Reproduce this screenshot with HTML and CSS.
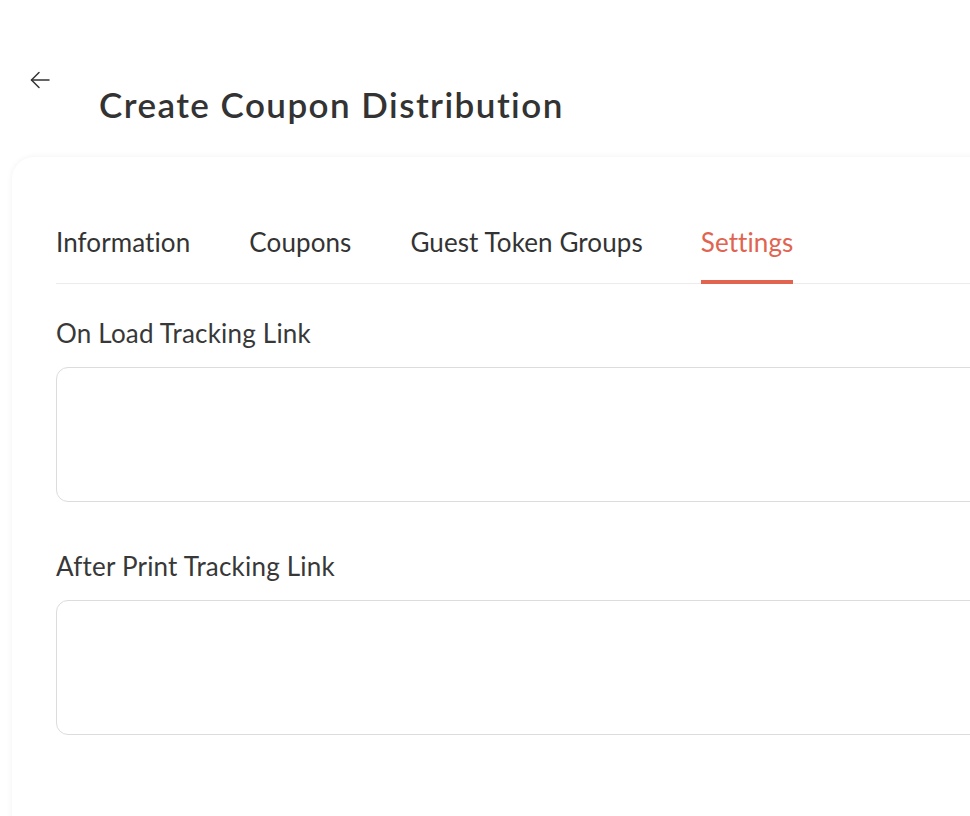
FILE: index.html
```html
<!DOCTYPE html>
<html lang="en">
<head>
<meta charset="utf-8">
<title>Create Coupon Distribution</title>
<link rel="stylesheet" href="styles.css">
</head>
<body>
<div class="page">
  <header class="page-header">
    <button class="back-btn" aria-label="Back">
      <svg width="24" height="24" viewBox="0 0 24 24" fill="none" stroke="#333" stroke-width="1.5" stroke-linecap="round" stroke-linejoin="round"><path d="M21 12H3.5"/><path d="M11 4.5L3.5 12l7.5 7.5"/></svg>
    </button>
    <h1 class="page-title">Create Coupon Distribution</h1>
  </header>
  <section class="card">
    <nav class="tabs">
      <a class="tab">Information</a>
      <a class="tab">Coupons</a>
      <a class="tab">Guest Token Groups</a>
      <a class="tab tab-active">Settings</a>
    </nav>
    <div class="field field-first">
      <label class="field-label">On Load Tracking Link</label>
      <textarea class="field-input"></textarea>
    </div>
    <div class="field">
      <label class="field-label">After Print Tracking Link</label>
      <textarea class="field-input"></textarea>
    </div>
  </section>
</div>
</body>
</html>
```
FILE: styles.css
```css
html, body {
  margin: 0;
  padding: 0;
  background: #fff;
  overflow: hidden;
}
body {
  font-family: "Lato", "Noto Sans", sans-serif;
  color: #333;
}
.page {
  width: 1040px;
}
.page-header {
  position: relative;
  height: 157px;
}
.back-btn {
  position: absolute;
  left: 28px;
  top: 68px;
  width: 24px;
  height: 24px;
  padding: 0;
  border: 0;
  background: none;
}
.page-title {
  margin: 0;
  padding: 84px 0 0 99px;
  font-size: 35px;
  line-height: 40px;
  font-weight: 600;
  letter-spacing: 1.45px;
  color: #333;
}
.card {
  margin-left: 12px;
  background: #fff;
  border-radius: 22px;
  box-shadow: 0 0 6px rgba(0,0,0,0.06);
  padding: 70px 0 80px 44px;
  min-height: 700px;
}
.tabs {
  display: flex;
  gap: 58px;
  border-bottom: 1px solid #ececec;
}
.tab {
  font-size: 26px;
  line-height: 30px;
  letter-spacing: 0.1px;
  padding-bottom: 23px;
  color: #333;
  border-bottom: 4px solid transparent;
  margin-bottom: -1px;
}
.tab:nth-child(2) {
  margin-left: 1px;
}
.tab:nth-child(3) {
  margin-left: 1px;
}
.tab-active {
  color: #e0644f;
  border-bottom-color: #e0644f;
}
.field {
  display: flex;
  flex-direction: column;
}
.field-label {
  font-size: 26px;
  line-height: 30px;
  letter-spacing: 0.2px;
  color: #383838;
  margin-top: 49px;
  margin-bottom: 19px;
}
.field-first .field-label {
  margin-top: 34px;
}
.field-input {
  height: 135px;
  box-sizing: border-box;
  border: 1px solid #dcdcdc;
  border-radius: 12px;
  resize: none;
}
```
